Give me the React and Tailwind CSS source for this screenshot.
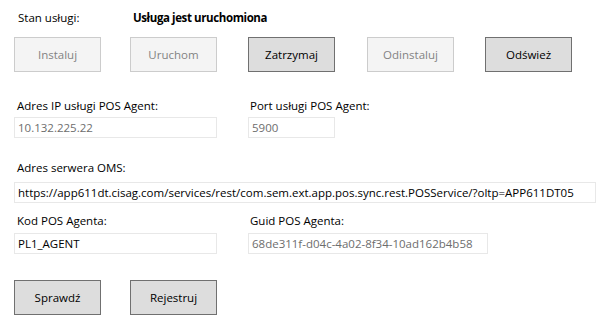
const font = { fontFamily: '"Open Sans", "Noto Sans", sans-serif' };

function Btn({ label, disabled, className = '' }) {
  return (
    <button
      type="button"
      disabled={disabled}
      className={
        'w-[87px] h-[35px] shrink-0 border text-[11.5px] ' +
        (disabled
          ? 'bg-[#f4f4f4] border-[#cccccc] text-[#838383]'
          : 'bg-[#dddddd] border-[#707070] text-black') +
        ' ' +
        className
      }
    >
      {label}
    </button>
  );
}

function Field({ value, disabled, className = '' }) {
  return (
    <div
      className={
        'h-[21px] border border-[#e8e8e8] bg-white flex items-center px-[3px] text-[11.5px] leading-none whitespace-nowrap overflow-hidden ' +
        (disabled ? 'text-[#6d6d6d]' : 'text-black') +
        ' ' +
        className
      }
    >
      {value}
    </div>
  );
}

export default function App() {
  return (
    <div className="w-[605px] h-[324px] bg-white text-black pl-[14px] pt-[10px] overflow-hidden text-[11.5px]" style={font}>
      <div className="flex items-center h-[16px]">
        <span className="ml-[4px] w-[115px]">Stan usługi:</span>
        <span className="font-bold tracking-[-0.4px]">Usługa jest uruchomiona</span>
      </div>

      <div className="flex mt-[11px]">
        <Btn label="Instaluj" disabled />
        <Btn label="Uruchom" disabled className="ml-[29px]" />
        <Btn label="Zatrzymaj" className="ml-[31px]" />
        <Btn label="Odinstaluj" disabled className="ml-[32px]" />
        <Btn label="Odśwież" className="ml-[31px]" />
      </div>

      <div className="flex mt-[26px] h-[16px] items-center">
        <span className="ml-[3px] w-[233px]">Adres IP usługi POS Agent:</span>
        <span>Port usługi POS Agent:</span>
      </div>
      <div className="flex mt-[3px]">
        <Field value="10.132.225.22" disabled className="w-[203px]" />
        <Field value="5900" disabled className="w-[87px] ml-[31px]" />
      </div>

      <div className="flex mt-[22px] h-[16px] items-center">
        <span className="ml-[3px]">Adres serwera OMS:</span>
      </div>
      <Field
        value="https://app611dt.cisag.com/services/rest/com.sem.ext.app.pos.sync.rest.POSService/?oltp=APP611DT05"
        className="w-[582px] mt-[6px]"
      />

      <div className="flex mt-[10px] h-[16px] items-center">
        <span className="ml-[3px] w-[233px]">Kod POS Agenta:</span>
        <span>Guid POS Agenta:</span>
      </div>
      <div className="flex mt-[4px]">
        <Field value="PL1_AGENT" className="w-[203px]" />
        <Field value="68de311f-d04c-4a02-8f34-10ad162b4b58" disabled className="w-[240px] ml-[31px]" />
      </div>

      <div className="flex mt-[26px]">
        <Btn label="Sprawdź" />
        <Btn label="Rejestruj" className="ml-[29px]" />
      </div>
    </div>
  );
}
